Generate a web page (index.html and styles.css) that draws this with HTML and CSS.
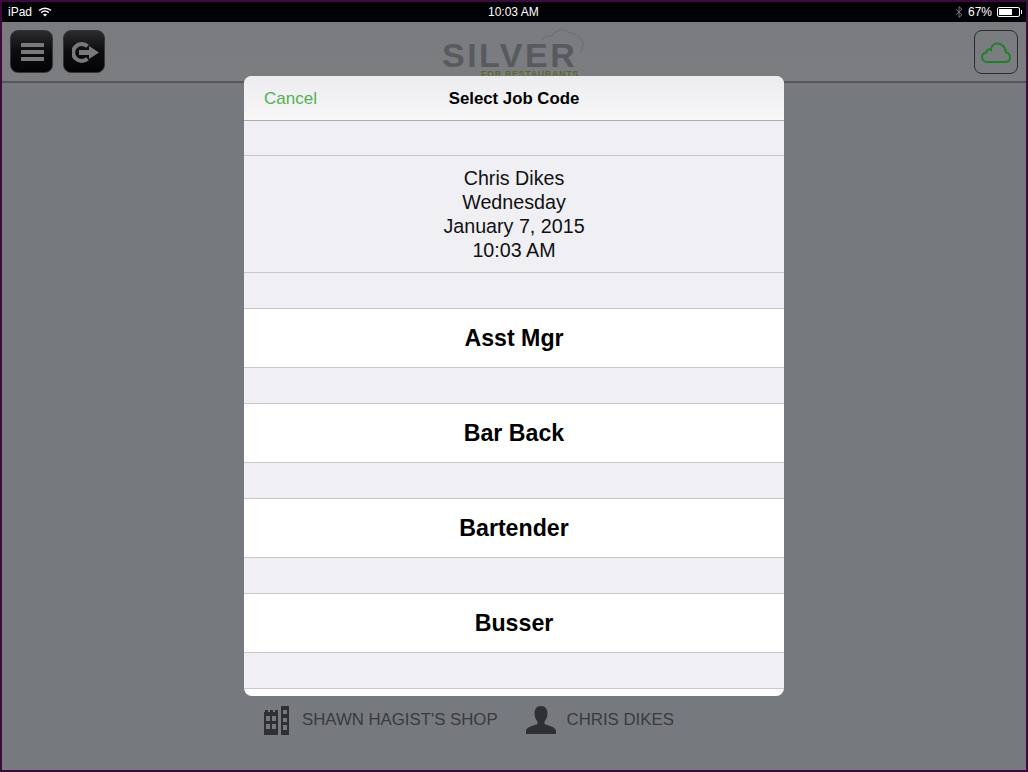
FILE: index.html
```html
<!DOCTYPE html>
<html>
  <head>
    <meta charset="utf-8">
    <title>Select Job Code</title>
    <link rel="stylesheet" href="styles.css">
  </head>
  <body>
  <div class="frame">
    <div class="status-bar">
      <div class="status-left">
        <span>iPad</span>
        <svg class="wifi" width="14" height="10" viewBox="0 0 14 10">
          <path d="M1 3.600C4.500 .4 9.500 .4 13 3.600" fill="none" stroke="#fff" stroke-width="1.400"/>
          <path d="M3.200 5.600C5.400 3.700 8.600 3.700 10.800 5.600" fill="none" stroke="#fff" stroke-width="1.400"/>
          <path d="M7 9.600L4.900 7.400C6.100 6.400 7.900 6.400 9.100 7.400Z" fill="#fff"/>
        </svg>
      </div>
      <div class="status-time">10:03 AM</div>
      <div class="status-right">
        <svg class="bluetooth" width="8" height="12" viewBox="0 0 8 12">
          <path d="M.8 3L7 8.800 4 11.400V.6L7 3.200 .8 9" fill="none" stroke="#77797c" stroke-width="1"/>
        </svg>
        <span>67%</span>
        <div class="battery"><div class="battery-level"></div></div>
      </div>
    </div>

    <header class="toolbar">
      <div class="toolbar-left">
        <button class="dark-btn menu" type="button">
          <svg width="23" height="18" viewBox="0 0 23 18">
            <path d="M0 0h23v4H0zM0 7h23v4H0zM0 14h23v4H0z" fill="#77797c"/>
          </svg>
        </button>
        <button class="dark-btn logout" type="button">
          <svg width="27" height="21" viewBox="0 0 27 21">
            <path d="M15.500 4.300A8.500 8.500 0 1 0 15.500 16.700" fill="none" stroke="#77797c" stroke-width="4"/>
            <path d="M7 8h10V4l10 6.500L17 17v-4H7z" fill="#77797c"/>
          </svg>
        </button>
      </div>
      <div class="logo">
        <svg class="logo-cloud" width="44" height="26" viewBox="0 0 44 26">
          <path d="M1 12C4 8 8 7 11 8.500C13 2 24 -1 29 5C34 5 38 7 39 11C43 13 43 19 39 24" fill="none" stroke="#6a6d70" stroke-width="1"/>
        </svg>
        <div class="logo-name">SILVER</div>
        <div class="logo-sub">FOR RESTAURANTS</div>
      </div>
      <button class="cloud-btn" type="button">
        <svg width="30" height="21" viewBox="0 0 30 21">
          <path d="M6 20H24C27.500 20 29 17.500 29 15C29 12.500 27 10.500 25 10.500C24.500 4 19.500 1 15.500 1.500C12 2 10 5 10 8C8 6.500 5 8 5.500 10.500C2.500 11 1 13 1 15C1 18 3.500 20 6 20Z" fill="none" stroke="#227f2b" stroke-width="2"/>
        </svg>
      </button>
    </header>

    <main class="content"></main>

    <footer class="info">
      <div class="info-item shop">
        <svg width="25" height="29" viewBox="0 0 25 29">
          <path fill-rule="evenodd" d="M0 6h1V4h3v2h2V4h3v2h2V4h3v25H0ZM2 10v5h4v-5ZM8 10v5h4v-5ZM2 18v5h4v-5ZM8 18v5h4v-5Z" fill="#2e3033"/>
          <path fill-rule="evenodd" d="M17 0h8v29h-8ZM19 4v4h4V4ZM19 12v4h4v-4ZM19 19v5h4v-5Z" fill="#2e3033"/>
        </svg>
        <span>SHAWN HAGIST'S SHOP</span>
      </div>
      <div class="info-item user">
        <svg width="30" height="28" viewBox="0 0 30 28">
          <path d="M15 0c4.500 0 6.500 3 6.500 7.500 0 3.500-1.500 6.500-3 8v2.500c3 1.500 10.500 2.500 11.500 6.500v3.500H0v-3.500c1-4 8.500-5 11.500-6.500v-2.500c-1.500-1.500-3-4.500-3-8C8.500 3 10.500 0 15 0Z" fill="#2e3033"/>
        </svg>
        <span>CHRIS DIKES</span>
      </div>
    </footer>

    <section class="modal">
      <div class="modal-head">
        <a class="cancel">Cancel</a>
        <h2 class="modal-title">Select Job Code</h2>
      </div>
      <div class="gap first"></div>
      <div class="summary">
        <div>Chris Dikes</div>
        <div>Wednesday</div>
        <div>January 7, 2015</div>
        <div>10:03 AM</div>
      </div>
      <div class="gap"></div>
      <div class="job">Asst Mgr</div>
      <div class="gap"></div>
      <div class="job">Bar Back</div>
      <div class="gap"></div>
      <div class="job">Bartender</div>
      <div class="gap"></div>
      <div class="job">Busser</div>
      <div class="gap last"></div>
    </section>
  </div>
  </body>
</html>
```

FILE: styles.css
```css
* {
  box-sizing: border-box;
}
html, body {
  margin: 0;
  padding: 0;
}
body {
  font-family: "Liberation Sans", Arial, sans-serif;
  background-color: #3c0a3c;
}
.frame {
  position: relative;
  width: 1028px;
  height: 772px;
  border: 2px solid #3c0a3c;
  display: flex;
  flex-direction: column;
  background-color: #767a7e;
  overflow: hidden;
}

/* status bar */
.status-bar {
  height: 20px;
  background-color: #020206;
  color: #fff;
  font-size: 12px;
  display: flex;
  align-items: center;
  justify-content: space-between;
  padding: 0 6px;
  position: relative;
}
.status-left, .status-right {
  display: flex;
  align-items: center;
}
.wifi {
  margin-left: 6px;
}
.status-time {
  position: absolute;
  left: 486px;
  top: 3px;
}
.bluetooth {
  margin-right: 5px;
}
.battery {
  width: 23px;
  height: 10px;
  border: 1px solid #fff;
  border-radius: 2px;
  padding: 1px;
  margin-left: 5px;
  position: relative;
}
.battery:after {
  content: '';
  position: absolute;
  right: -3px;
  top: 2px;
  width: 1px;
  height: 4px;
  background-color: #fff;
}
.battery-level {
  width: 67%;
  height: 100%;
  background-color: #fff;
}

/* toolbar */
.toolbar {
  height: 61px;
  background: linear-gradient(#797b7f, #7b7d81);
  border-bottom: 2px solid #55575a;
  display: flex;
  align-items: flex-start;
  justify-content: space-between;
  padding: 8px 8px 0 8px;
  position: relative;
}
.toolbar-left {
  display: flex;
  gap: 10px;
}
.dark-btn {
  width: 43px;
  height: 43px;
  padding: 0;
  border: 1px solid #333538;
  border-radius: 8px;
  background: linear-gradient(#2a2b2e, #0c0c0f 50%, #030306);
  display: flex;
  align-items: center;
  justify-content: center;
}
.menu {
  padding: 1px 0 0 2px;
}
.logout {
  width: 42px;
  padding: 1px 0 0 3px;
}
.cloud-btn {
  width: 44px;
  height: 44px;
  padding: 0;
  border: 1px solid #2a2c2e;
  border-radius: 8px;
  background-color: transparent;
  display: flex;
  align-items: center;
  justify-content: center;
}
.logo {
  position: absolute;
  left: 439px;
  top: 19px;
  width: 146px;
}
.logo-cloud {
  position: absolute;
  left: 100px;
  top: -13px;
}
.logo-name {
  font-size: 34px;
  line-height: 29px;
  font-weight: bold;
  letter-spacing: 2.5px;
  padding-left: 1px;
  color: #585b5e;
}
.logo-sub {
  margin-left: 40px;
  font-size: 9px;
  line-height: 9px;
  font-weight: bold;
  letter-spacing: 0.6px;
  white-space: nowrap;
  color: #556b2c;
}

.content {
  flex: 1;
}

/* shop and user under the modal */
.info {
  height: 66px;
  padding: 0 0 34px 262px;
  display: flex;
  align-items: center;
  color: #393b3f;
  font-size: 16.8px;
}
.info-item {
  display: flex;
  align-items: center;
  gap: 13px;
}
.user {
  margin-left: 28px;
  gap: 11px;
}

/* modal */
.modal {
  position: absolute;
  left: 242px;
  top: 74px;
  width: 540px;
  height: 620px;
  background-color: #fff;
  border-radius: 8px;
  overflow: hidden;
}
.modal-head {
  height: 45px;
  padding-top: 1px;
  background: linear-gradient(#ececef, #f7f7f8);
  border-bottom: 1px solid #a9a9ae;
  display: flex;
  align-items: center;
  justify-content: center;
  position: relative;
}
.cancel {
  position: absolute;
  left: 20px;
  top: 14px;
  font-size: 17px;
  line-height: 18px;
  color: #52b153;
}
.modal-title {
  margin: 0;
  font-size: 16.8px;
  font-weight: bold;
  color: #000;
}
.gap {
  height: 35px;
  background-color: #efeff4;
}
.first {
  height: 34px;
}
.last {
  height: 36px;
  border-bottom: 1px solid #c8c8cc;
}
.summary {
  height: 118px;
  background-color: #efeff4;
  border-top: 1px solid #c8c8cc;
  border-bottom: 1px solid #c8c8cc;
  text-align: center;
  font-size: 19.7px;
  line-height: 24px;
  color: #111;
  padding-top: 10px;
}
.job {
  height: 60px;
  background-color: #fff;
  border-top: 1px solid #c8c8cc;
  border-bottom: 1px solid #c8c8cc;
  display: flex;
  align-items: center;
  justify-content: center;
  font-size: 23.2px;
  font-weight: bold;
  color: #000;
}
```
